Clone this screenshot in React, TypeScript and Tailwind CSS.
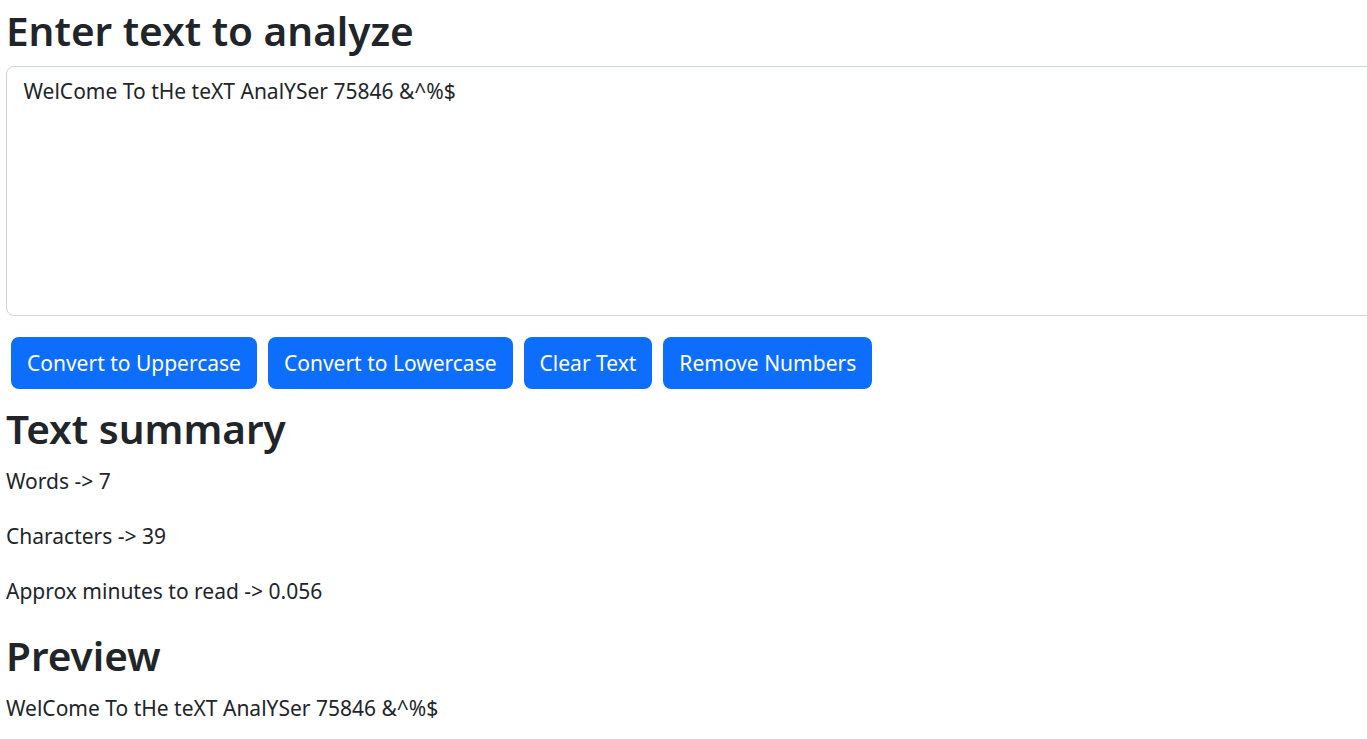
import React from "react";

const text = "WelCome To tHe teXT AnalYSer 75846 &^%$";

export default function App() {
  return (
    <div
      className="h-screen w-screen overflow-hidden bg-white text-[#212529]"
      style={{ fontFamily: '"Noto Sans", "Open Sans", sans-serif' }}
    >
      <div className="px-[6px] pt-[6px]">
        <h1 className="m-0 text-[40.5px] font-semibold leading-[49px] mb-[11px]">Enter text to analyze</h1>
        <textarea
          className="block h-[250px] w-[1420px] resize-none rounded-[8px] border border-[#ced4da] px-[16.5px] py-[8px] text-[21px] leading-[33px] text-[#212529] outline-none"
          defaultValue={text}
        />
        <div className="mt-[21px] flex gap-[11px] px-[5px]">
          {["Convert to Uppercase", "Convert to Lowercase", "Clear Text", "Remove Numbers"].map((b) => (
            <button
              key={b}
              className="h-[52px] rounded-[8px] bg-[#0d6efd] px-[16px] text-[21px] leading-[33px] text-white"
            >
              {b}
            </button>
          ))}
        </div>
        <h2 className="m-0 mt-[15px] text-[40.5px] font-semibold leading-[49px] mb-[12px]">Text summary</h2>
        <p className="m-0 mb-[22px] text-[21px] leading-[33px]">Words -&gt; 7</p>
        <p className="m-0 mb-[22px] text-[21px] leading-[33px]">Characters -&gt; 39</p>
        <p className="m-0 mb-[23px] text-[21px] leading-[33px]">Approx minutes to read -&gt; 0.056</p>
        <h2 className="m-0 text-[40.5px] font-semibold leading-[49px] mb-[12px]">Preview</h2>
        <p className="m-0 text-[21px] leading-[33px]">{text}</p>
      </div>
    </div>
  );
}
